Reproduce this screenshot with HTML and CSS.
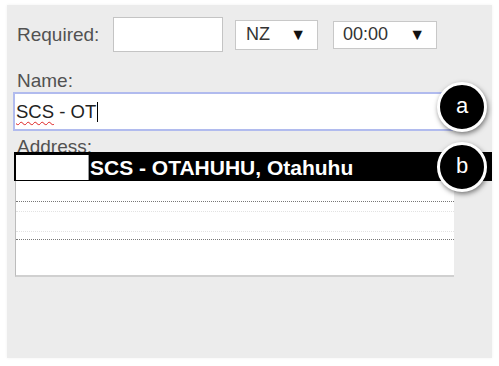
FILE: index.html
```html
<!DOCTYPE html>
<html lang="en">
<head>
    <meta charset="UTF-8">
    <title>Address lookup</title>
    <link rel="stylesheet" href="styles.css">
</head>
<body>
    <div class="panel">
        <div class="row">
            <label class="label" for="required">Required:</label>
            <input type="text" id="required" class="box required">
            <div class="select country"><span>NZ</span><span class="arrow">&#9660;</span></div>
            <div class="select time"><span>00:00</span><span class="arrow">&#9660;</span></div>
        </div>

        <div class="label name-label">Name:</div>
        <div class="name-input"><span class="typo">SCS</span>&nbsp;- OT<span class="caret"></span></div>

        <div class="label address-label">Address:</div>
        <div class="address-list">
            <div class="item"></div>
            <div class="item picked"><div class="ghost"></div></div>
            <div class="item"></div>
        </div>

        <div class="suggestion">
            <span class="blank"></span>
            <span>SCS - OTAHUHU, Otahuhu</span>
        </div>

        <div class="step step-a">a</div>
        <div class="step step-b">b</div>
    </div>
</body>
</html>
```

FILE: styles.css
```css
body {
    margin: 0;
    background: #fff;
    font-family: "Liberation Sans", Arial, sans-serif;
}
.panel {
    position: relative;
    margin: 5px 7px;
    width: 485px;
    height: 353px;
    box-sizing: border-box;
    padding: 12px 0 0 6px;
    background: #ececec;
    box-shadow: 0 0 3px rgba(0,0,0,0.06);
}
.row {
    display: flex;
    align-items: center;
    height: 35px;
}
.label {
    color: #525252;
    font-size: 19px;
    line-height: 22px;
    margin-left: 4px;
}
.row .label {
    width: 96px;
}
.box {
    box-sizing: border-box;
    background: #fff;
    border: 1px solid #c4c4c4;
    margin: 0;
    padding: 0;
}
.required {
    width: 110px;
    height: 35px;
}
.select {
    box-sizing: border-box;
    display: flex;
    align-items: center;
    justify-content: space-between;
    background: #fff;
    border: 1px solid #c8c8c8;
    color: #333;
    font-size: 18px;
    padding: 0 11px 0 10px;
}
.select .arrow {
    color: #111;
    font-size: 16px;
}
.country {
    margin-left: 12px;
    width: 83px;
    height: 30px;
}
.time {
    margin-left: 15px;
    width: 104px;
    height: 28px;
    padding-left: 9px;
    padding-right: 11px;
}
.name-label {
    margin-top: 18px;
}
.name-input {
    box-sizing: border-box;
    display: flex;
    align-items: center;
    width: 440px;
    height: 39px;
    background: #fff;
    border: 2px solid #b1bbee;
    padding-left: 1px;
    color: #222;
    font-size: 18.5px;
}
.typo {
    text-decoration: underline wavy #d22;
    text-decoration-thickness: 1px;
    text-underline-offset: 3px;
}
.caret {
    display: inline-block;
    width: 1px;
    height: 20px;
    margin-left: 1px;
    background: #000;
}
.address-label {
    margin-top: 5px;
}
.address-list {
    box-sizing: border-box;
    width: 439px;
    height: 124px;
    margin: -5px 0 0 2px;
    background: #fff;
    border-left: 1px solid #bcbcbc;
    border-bottom: 2px solid #d0d0d0;
    padding-top: 48px;
}
.picked {
    box-sizing: border-box;
    height: 39px;
    border-top: 1px dotted #777;
    border-bottom: 1px dotted #777;
    padding-top: 9px;
}
.ghost {
    height: 19px;
    border-top: 1px dotted #e2e2e2;
    border-bottom: 1px dotted #e2e2e2;
}
.suggestion {
    position: absolute;
    left: 7px;
    top: 147px;
    width: 478px;
    height: 29px;
    box-sizing: border-box;
    display: flex;
    align-items: center;
    gap: 1px;
    background: #000;
    color: #fff;
    font-size: 21px;
    font-weight: bold;
    padding: 3px 0 1px 2px;
}
.blank {
    align-self: stretch;
    width: 72px;
    background: #fff;
    border-right: 1px solid #999;
}
.step {
    position: absolute;
    left: 430px;
    width: 44px;
    height: 44px;
    border-radius: 50%;
    background: #000;
    border: 3px solid #fff;
    box-shadow: 1px 2px 5px rgba(0,0,0,0.5);
    color: #fff;
    font-size: 22px;
    line-height: 42px;
    text-align: center;
}
.step-a {
    top: 77px;
}
.step-b {
    top: 137px;
}
```
